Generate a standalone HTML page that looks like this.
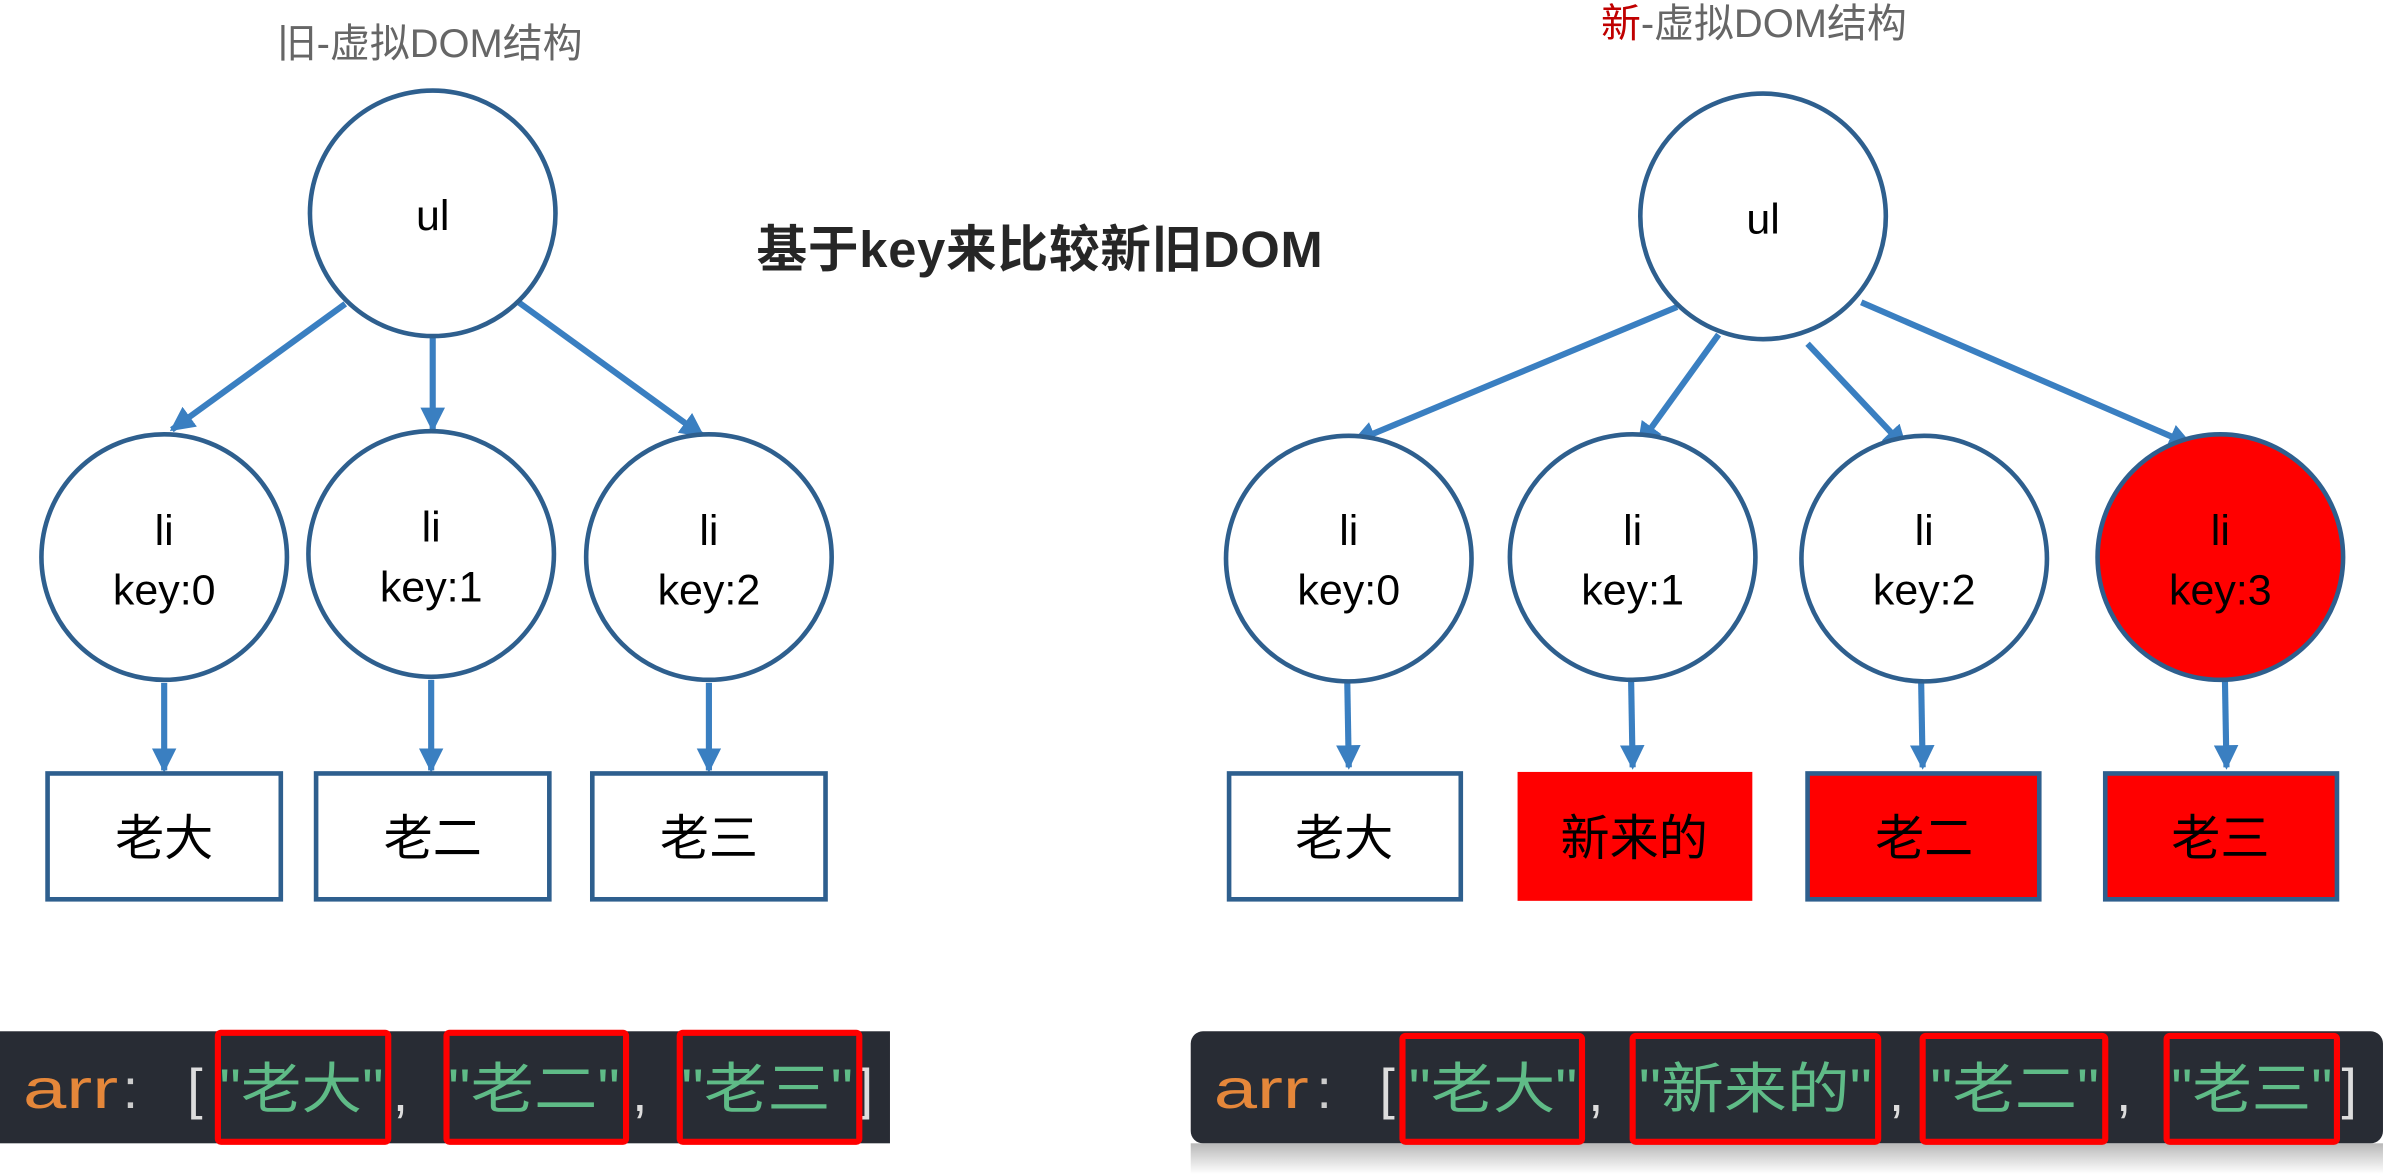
<!DOCTYPE html>
<html><head><meta charset="utf-8"><style>
html,body{margin:0;padding:0;background:#fff;overflow:hidden}
svg{display:block}
text{font-family:"Liberation Sans","Noto Sans CJK SC",sans-serif}
</style></head><body>
<svg width="2406" height="1174" viewBox="0 0 1568 765" preserveAspectRatio="none" xmlns="http://www.w3.org/2000/svg">
<defs>
<marker id="ar" viewBox="0 0 10 10" refX="9" refY="5" markerWidth="4" markerHeight="4" orient="auto" markerUnits="strokeWidth"><path d="M0,0 L10,5 L0,10 z" fill="#3a7fc1"/></marker>
<linearGradient id="sh" x1="0" y1="0" x2="0" y2="1"><stop offset="0" stop-color="#b8b8b8"/><stop offset="1" stop-color="#fff"/></linearGradient>
</defs>
<text x="280" y="37" font-size="26" fill="#666" text-anchor="middle">旧-虚拟DOM结构</text>
<text x="1143" y="24" font-size="26" fill="#666" text-anchor="middle"><tspan fill="#c00000">新</tspan>-虚拟DOM结构</text>
<text x="493" y="174" font-size="33" font-weight="bold" fill="#262626" textLength="369">基于key来比较新旧DOM</text>
<g stroke="#3a7fc1" stroke-width="4" fill="none" marker-end="url(#ar)">
<line x1="225" y1="198" x2="112" y2="280"/>
<line x1="282" y1="220" x2="282" y2="280"/>
<line x1="338" y1="197" x2="458" y2="284"/>
<line x1="107" y1="445" x2="107" y2="502"/>
<line x1="281" y1="443" x2="281" y2="502"/>
<line x1="462" y1="445" x2="462" y2="502"/>
<line x1="1093" y1="200" x2="882" y2="288"/>
<line x1="1120" y1="218" x2="1068" y2="290"/>
<line x1="1178" y1="224" x2="1242" y2="292"/>
<line x1="1213" y1="197" x2="1428" y2="290"/>
<line x1="878" y1="443" x2="879" y2="500"/>
<line x1="1063" y1="443" x2="1064" y2="500"/>
<line x1="1252" y1="443" x2="1253" y2="500"/>
<line x1="1450" y1="443" x2="1451" y2="500"/>
</g>
<g stroke="#2e5f8e" stroke-width="3" fill="#fff">
<circle cx="282" cy="139" r="80"/>
<circle cx="107" cy="363" r="80"/><circle cx="281" cy="361" r="80"/><circle cx="462" cy="363" r="80"/>
<circle cx="1149" cy="141" r="80"/>
<circle cx="879" cy="364" r="80"/><circle cx="1064" cy="363" r="80"/><circle cx="1254" cy="364" r="80"/>
<circle cx="1447" cy="363" r="80" fill="#ff0000"/>
<rect x="31" y="504" width="152" height="82"/><rect x="206" y="504" width="152" height="82"/><rect x="386" y="504" width="152" height="82"/>
<rect x="801" y="504" width="151" height="82"/>
<rect x="1178" y="504" width="151" height="82" fill="#ff0000"/><rect x="1372" y="504" width="151" height="82" fill="#ff0000"/>
</g>
<rect x="989" y="503" width="153" height="84" fill="#ff0000"/>
<g font-size="28" fill="#000" text-anchor="middle">
<text x="282" y="150">ul</text><text x="1149" y="152">ul</text>
<text x="107" y="355">li</text><text x="107" y="394">key:0</text>
<text x="281" y="353">li</text><text x="281" y="392">key:1</text>
<text x="462" y="355">li</text><text x="462" y="394">key:2</text>
<text x="879" y="355">li</text><text x="879" y="394">key:0</text>
<text x="1064" y="355">li</text><text x="1064" y="394">key:1</text>
<text x="1254" y="355">li</text><text x="1254" y="394">key:2</text>
<text x="1447" y="355">li</text><text x="1447" y="394">key:3</text>
</g>
<g font-size="32" fill="#000" text-anchor="middle">
<text x="107" y="557">老大</text><text x="282" y="557">老二</text><text x="462" y="557">老三</text>
<text x="876" y="557">老大</text><text x="1065" y="557">新来的</text><text x="1254" y="557">老二</text><text x="1447" y="557">老三</text>
</g>
<rect x="0" y="672" width="580" height="73" fill="#282c34"/>
<rect x="776" y="745" width="777" height="20" fill="url(#sh)"/>
<rect x="776" y="672" width="777" height="73" rx="8" fill="#282c34"/>
<g font-size="36">
<text x="15" y="722" fill="#e5873a" textLength="62" lengthAdjust="spacingAndGlyphs">arr</text>
<text x="80" y="722" fill="#ccc">:</text><text x="122" y="722" fill="#ddd">[</text>
<text x="143" y="722" fill="#5fbb87" textLength="107" lengthAdjust="spacingAndGlyphs">"老大"</text>
<text x="256" y="724" fill="#ddd">,</text>
<text x="292" y="722" fill="#5fbb87" textLength="112" lengthAdjust="spacingAndGlyphs">"老二"</text>
<text x="412" y="724" fill="#ddd">,</text>
<text x="444" y="722" fill="#5fbb87" textLength="112" lengthAdjust="spacingAndGlyphs">"老三"</text>
<text x="559" y="722" fill="#ddd">]</text>
<text x="791" y="722" fill="#e5873a" textLength="62" lengthAdjust="spacingAndGlyphs">arr</text>
<text x="858" y="722" fill="#ccc">:</text><text x="899" y="722" fill="#ddd">[</text>
<text x="918" y="722" fill="#5fbb87" textLength="110" lengthAdjust="spacingAndGlyphs">"老大"</text>
<text x="1035" y="724" fill="#ddd">,</text>
<text x="1068" y="722" fill="#5fbb87" textLength="152" lengthAdjust="spacingAndGlyphs">"新来的"</text>
<text x="1231" y="724" fill="#ddd">,</text>
<text x="1258" y="722" fill="#5fbb87" textLength="110" lengthAdjust="spacingAndGlyphs">"老二"</text>
<text x="1379" y="724" fill="#ddd">,</text>
<text x="1415" y="722" fill="#5fbb87" textLength="105" lengthAdjust="spacingAndGlyphs">"老三"</text>
<text x="1526" y="722" fill="#ddd">]</text>
</g>
<g fill="none" stroke="#ff0000" stroke-width="4">
<rect x="142" y="673" width="111" height="71" rx="2"/>
<rect x="291" y="673" width="117" height="71" rx="2"/>
<rect x="443" y="673" width="117" height="71" rx="2"/>
<rect x="914" y="675" width="117" height="69" rx="2"/>
<rect x="1064" y="675" width="160" height="69" rx="2"/>
<rect x="1253" y="675" width="119" height="69" rx="2"/>
<rect x="1412" y="675" width="111" height="69" rx="2"/>
</g>
</svg>
</body></html>
